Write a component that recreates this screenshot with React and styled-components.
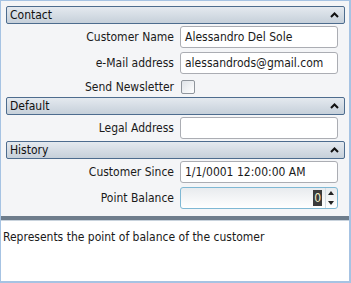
import React from 'react'
import styled, { createGlobalStyle } from 'styled-components'

const Global = createGlobalStyle`
  html, body { margin: 0; padding: 0; background: #ffffff; }
  * { box-sizing: border-box; }
`

const Frame = styled.div`
  width: 351px;
  height: 283px;
  border: 1px solid #a6c3e3;
  border-right-width: 2px;
  border-bottom-width: 2px;
  display: flex;
  flex-direction: column;
  font-family: "DejaVu Sans Condensed", "DejaVu Sans", sans-serif;
  font-size: 12px;
  color: #1a1a1a;
  background: #ffffff;
`

const Grid = styled.div`
  background: #f4f5f7;
  padding: 5px 4px 5px 5px;
  display: flex;
  flex-direction: column;
`

const Header = styled.div`
  height: 18px;
  border: 1px solid #4d6c8e;
  border-radius: 2px;
  background: linear-gradient(#e4e9ef, #c6d0da);
  display: flex;
  align-items: center;
  justify-content: space-between;
  padding: 0 5px 0 3px;
  color: #111;
`

const Row = styled.div`
  display: grid;
  grid-template-columns: 168px 158px;
  column-gap: 6px;
  align-items: center;
  height: ${p => p.h || 26}px;
`

const Label = styled.div`
  text-align: right;
  white-space: nowrap;
`

const TextBox = styled.div`
  height: 22px;
  border: 1px solid #abadb3;
  border-radius: 3px;
  background: #ffffff;
  padding: 0 4px;
  display: flex;
  align-items: center;
  white-space: nowrap;
  overflow: hidden;
`

const Check = styled.div`
  width: 14px;
  height: 14px;
  margin-left: 1px;
  border: 1px solid #8f959c;
  border-radius: 2px;
  background: linear-gradient(135deg, #dfe3e8, #ffffff);
`

const Numeric = styled.div`
  height: 22px;
  border: 1px solid #7fb8d4;
  border-radius: 3px;
  background: linear-gradient(#e8ebee, #ffffff);
  display: flex;
  align-items: stretch;
  justify-content: flex-end;
`

const Selected = styled.span`
  align-self: center;
  background: #3b3b3b;
  color: #f5f0c8;
  line-height: 16px;
  padding: 0 1px;
  margin-right: 3px;
`

const Spin = styled.div`
  width: 11px;
  border-left: 1px solid #d4dbe2;
  display: flex;
  flex-direction: column;
  justify-content: space-around;
  align-items: center;
  margin-right: 1px;
`

const Separator = styled.div`
  height: 5px;
  background: #6e7d8c;
  border-bottom: 1px solid #c9d3dd;
`

const Description = styled.div`
  flex: 1;
  background: #ffffff;
  padding: 9px 2px;
`

const Chevron = () => (
  <svg width="9" height="6" viewBox="0 0 9 6">
    <path d="M1 5 L4.5 1.5 L8 5" fill="none" stroke="#111" strokeWidth="2" />
  </svg>
)

const Tri = ({ up }) => (
  <svg width="6" height="4" viewBox="0 0 6 4">
    <path d={up ? 'M0 4 L3 0 L6 4 Z' : 'M0 0 L3 4 L6 0 Z'} fill="#222" />
  </svg>
)

const Section = ({ title }) => (
  <Header>
    <span>{title}</span>
    <Chevron />
  </Header>
)

export default function App() {
  return (
    <Frame>
      <Global />
      <Grid>
        <Section title="Contact" />
        <Row>
          <Label>Customer Name</Label>
          <TextBox>Alessandro Del Sole</TextBox>
        </Row>
        <Row>
          <Label>e-Mail address</Label>
          <TextBox>alessandrods@gmail.com</TextBox>
        </Row>
        <Row h={21}>
          <Label>Send Newsletter</Label>
          <Check />
        </Row>
        <Section title="Default" />
        <Row>
          <Label>Legal Address</Label>
          <TextBox />
        </Row>
        <Section title="History" />
        <Row>
          <Label>Customer Since</Label>
          <TextBox>1/1/0001 12:00:00 AM</TextBox>
        </Row>
        <Row>
          <Label>Point Balance</Label>
          <Numeric>
            <Selected>0</Selected>
            <Spin>
              <Tri up />
              <Tri />
            </Spin>
          </Numeric>
        </Row>
      </Grid>
      <Separator />
      <Description>Represents the point of balance of the customer</Description>
    </Frame>
  )
}
